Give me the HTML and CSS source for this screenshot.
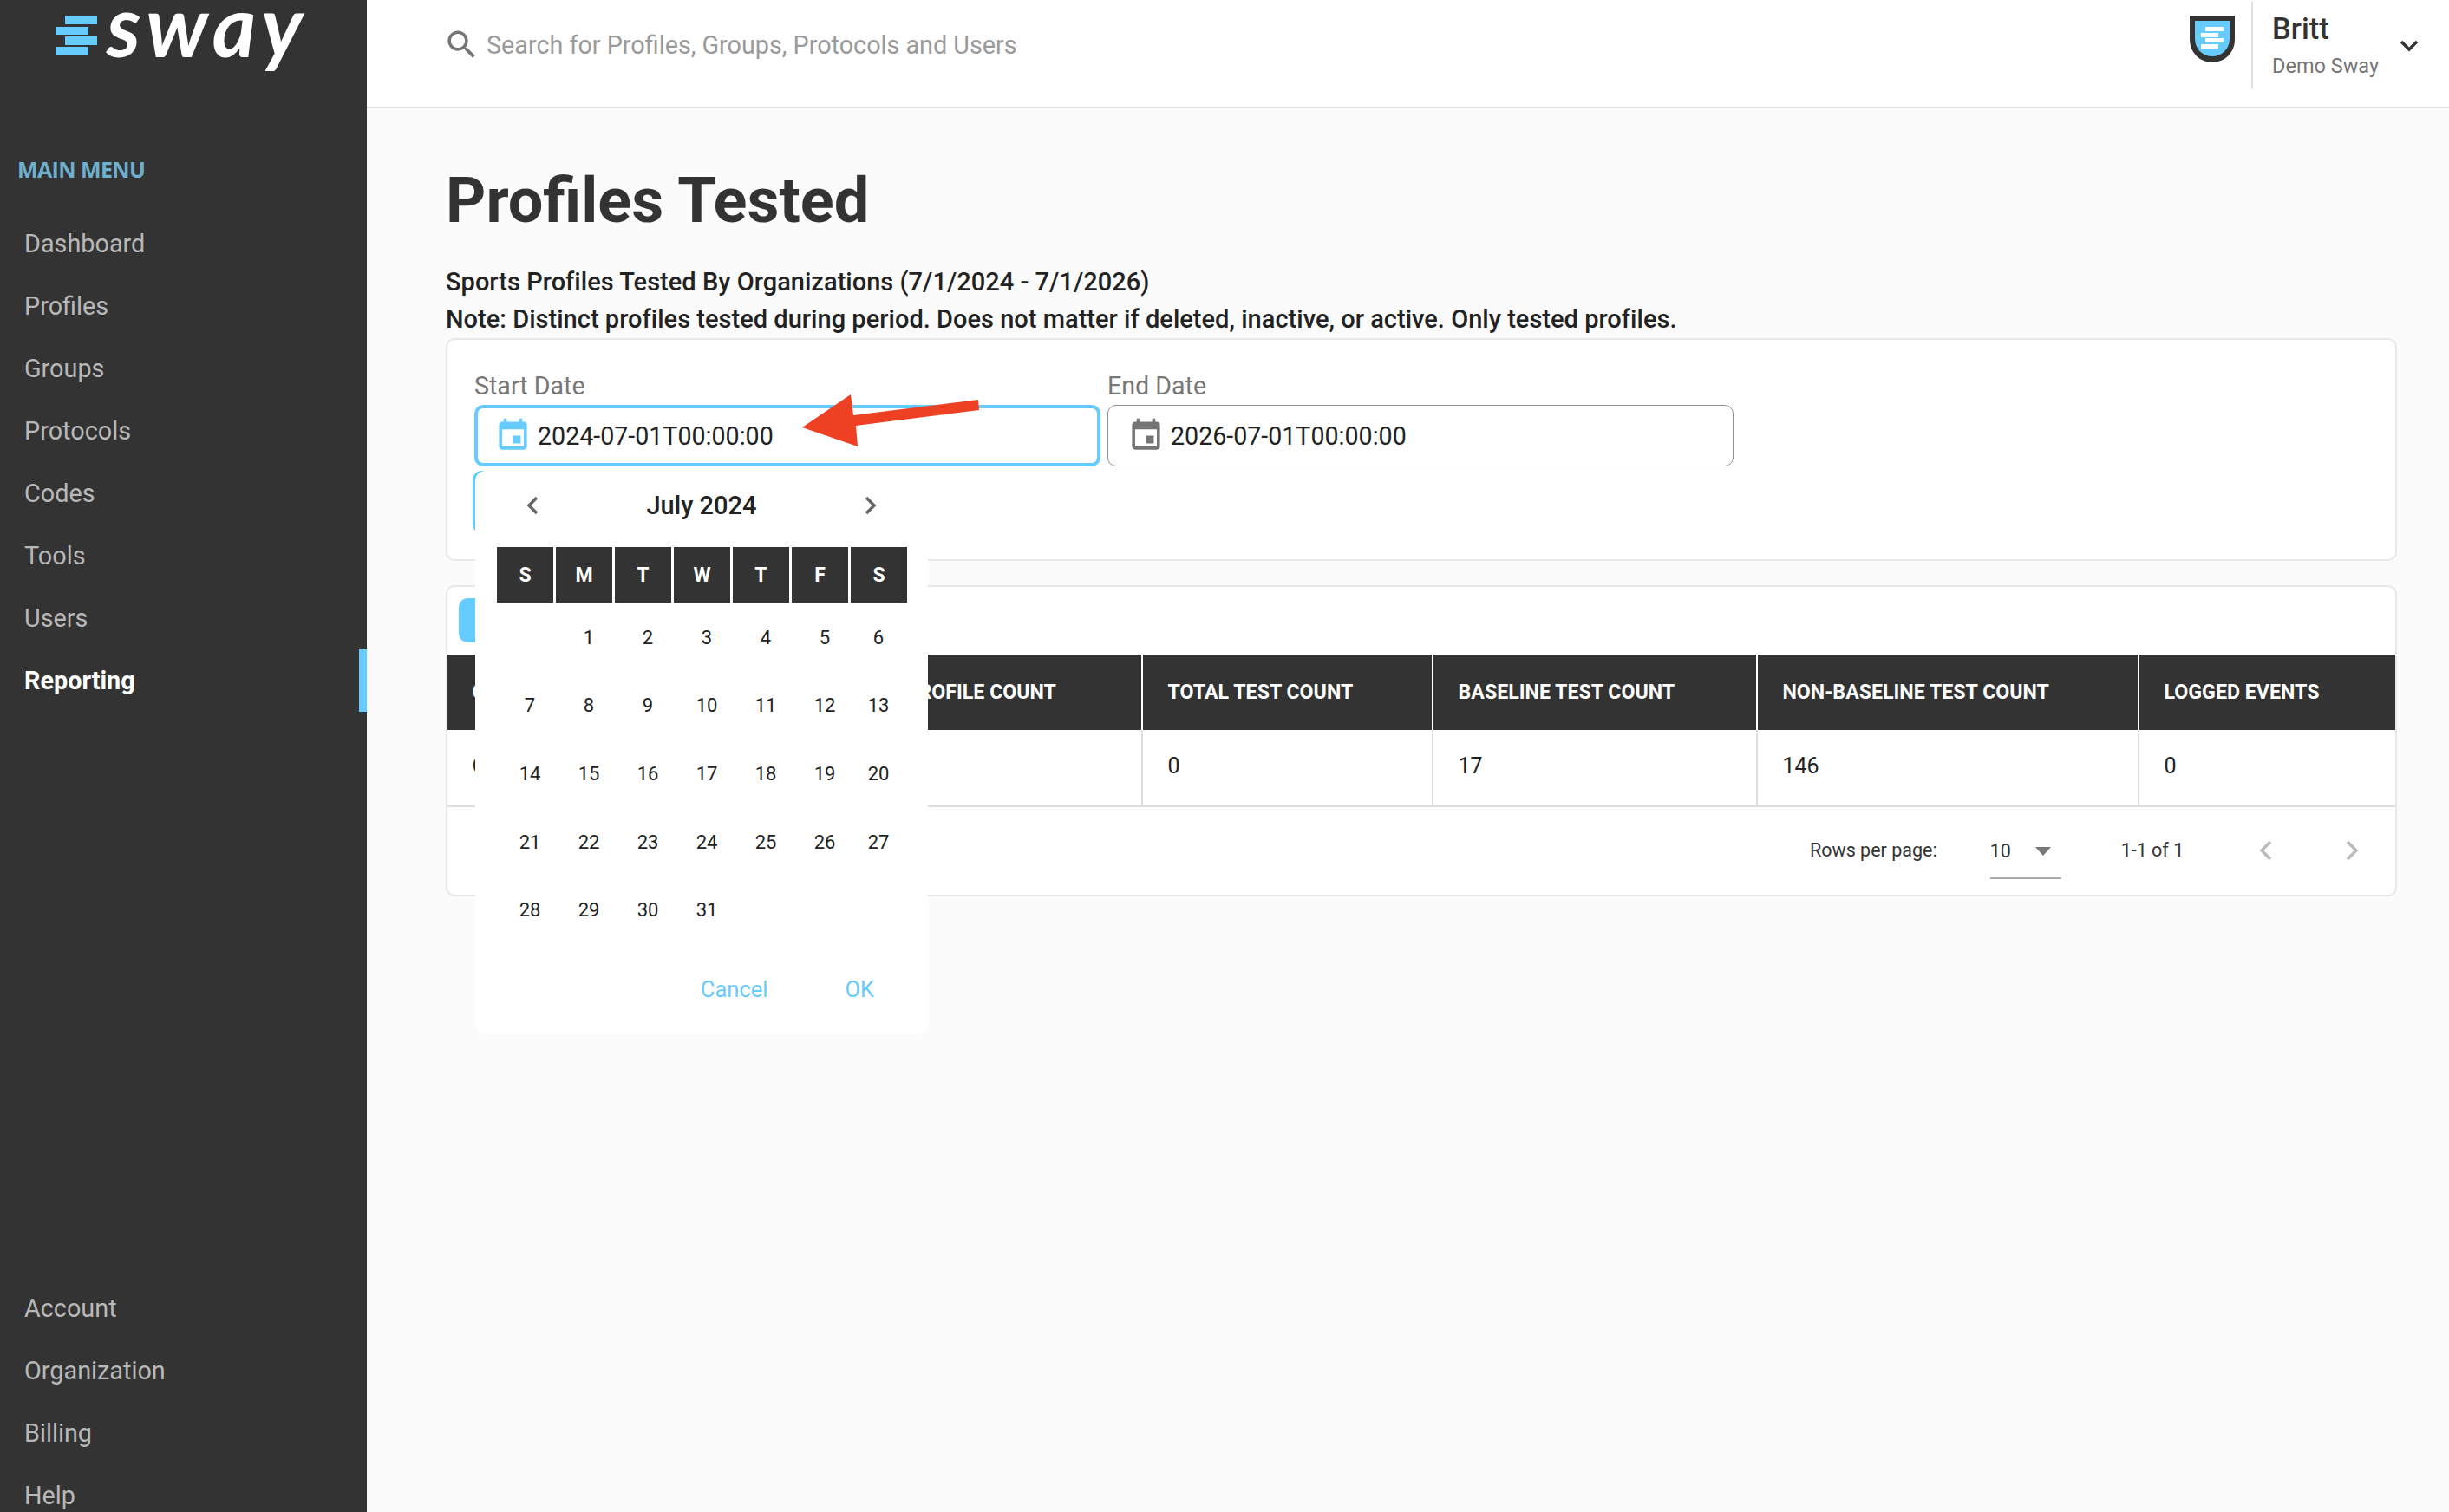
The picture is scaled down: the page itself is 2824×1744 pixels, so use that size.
FILE: index.html
```html
<!DOCTYPE html>
<html lang="en">
<head>
<meta charset="utf-8">
<title>Profiles Tested</title>
<link rel="stylesheet" href="styles.css">
</head>
<body>
<div class="shell">
  <aside class="sidebar">
    <div class="logo">
      <svg class="logo-mark" width="48" height="46" viewBox="0 0 48 46"><rect x="11" y="0" width="37" height="10"/><rect x="0" y="13" width="38" height="9"/><rect x="11" y="24" width="37" height="10"/><rect x="0" y="36" width="38" height="10"/></svg>
      <span class="logo-word">sway</span>
    </div>
    <div class="menu-title">MAIN MENU</div>
    <nav class="nav">
      <a class="nav-item">Dashboard</a>
      <a class="nav-item">Profiles</a>
      <a class="nav-item">Groups</a>
      <a class="nav-item">Protocols</a>
      <a class="nav-item">Codes</a>
      <a class="nav-item">Tools</a>
      <a class="nav-item">Users</a>
      <a class="nav-item active">Reporting</a>
    </nav>
    <nav class="nav nav-bottom">
      <a class="nav-item">Account</a>
      <a class="nav-item">Organization</a>
      <a class="nav-item">Billing</a>
      <a class="nav-item">Help</a>
    </nav>
  </aside>
  <div class="main">
    <header class="topbar">
      <div class="search">
        <svg class="search-icon" width="43" height="43" viewBox="0 0 24 24"><path d="M15.5 14h-.79l-.28-.27C15.41 12.59 16 11.11 16 9.5 16 5.91 13.09 3 9.5 3S3 5.91 3 9.5 5.91 16 9.5 16c1.61 0 3.09-.59 4.23-1.57l.27.28v.79l5 4.99L20.49 19l-4.99-5zm-6 0C7.01 14 5 11.99 5 9.5S7.01 5 9.5 5 14 7.01 14 9.5 11.99 14 9.5 14z"/></svg>
        <span class="search-text">Search for Profiles, Groups, Protocols and Users</span>
      </div>
      <div class="account">
        <svg class="shield" width="52" height="54" viewBox="0 0 52 54"><path class="shield-outer" d="M0 0H52V28A26 26 0 0 1 0 28Z"/><path class="shield-inner" d="M6 6H46V27A20 20 0 0 1 6 27Z"/><rect class="shield-bar" x="18" y="13" width="21" height="5"/><rect class="shield-bar" x="13" y="20" width="20" height="5"/><rect class="shield-bar" x="18" y="26" width="21" height="5"/><rect class="shield-bar" x="13" y="33" width="20" height="5"/></svg>
        <div class="account-info">
          <div class="account-name">Britt</div>
          <div class="account-org">Demo Sway</div>
        </div>
        <svg class="account-chevron" width="22" height="14" viewBox="0 0 22 14"><path d="M2 2L11 11L20 2"/></svg>
      </div>
    </header>
    <main class="content">
      <h1 class="title">Profiles Tested</h1>
      <p class="subtitle">Sports Profiles Tested By Organizations (7/1/2024 - 7/1/2026)</p>
      <p class="subtitle">Note: Distinct profiles tested during period. Does not matter if deleted, inactive, or active. Only tested profiles.</p>

      <section class="card filter-card">
        <div class="fields">
          <div class="field">
            <div class="field-label">Start Date</div>
            <div class="date-input focused">
              <svg class="cal-icon" width="43" height="43" viewBox="0 0 24 24"><path d="M17 12h-5v5h5v-5zM16 1v2H8V1H6v2H5c-1.11 0-1.99.9-1.99 2L3 19c0 1.1.89 2 2 2h14c1.1 0 2-.9 2-2V5c0-1.1-.9-2-2-2h-1V1h-2zm3 18H5V8h14v11z"/></svg>
              <span>2024-07-01T00:00:00</span>
            </div>
          </div>
          <div class="field">
            <div class="field-label">End Date</div>
            <div class="date-input">
              <svg class="cal-icon" width="43" height="43" viewBox="0 0 24 24"><path d="M17 12h-5v5h5v-5zM16 1v2H8V1H6v2H5c-1.11 0-1.99.9-1.99 2L3 19c0 1.1.89 2 2 2h14c1.1 0 2-.9 2-2V5c0-1.1-.9-2-2-2h-1V1h-2zm3 18H5V8h14v11z"/></svg>
              <span>2026-07-01T00:00:00</span>
            </div>
          </div>
        </div>
        <div class="run-button"></div>
      </section>

      <section class="card table-card">
        <div class="export-button"></div>
        <table class="report">
          <colgroup><col class="c1"><col class="c2"><col class="c3"><col class="c4"><col class="c5"><col class="c6"></colgroup>
          <thead>
            <tr><th>ORGANIZATION</th><th>PROFILE COUNT</th><th>TOTAL TEST COUNT</th><th>BASELINE TEST COUNT</th><th>NON-BASELINE TEST COUNT</th><th>LOGGED EVENTS</th></tr>
          </thead>
          <tbody>
            <tr><td>Organization</td><td>5</td><td>0</td><td>17</td><td>146</td><td>0</td></tr>
          </tbody>
        </table>
        <div class="pager">
          <span class="pager-label">Rows per page:</span>
          <div class="pager-select"><span>10</span><i class="caret"></i></div>
          <span class="pager-range">1-1 of 1</span>
          <svg class="pager-arrow" width="16" height="24" viewBox="0 0 16 24"><path d="M13 2L3 12L13 22"/></svg>
          <svg class="pager-arrow" width="16" height="24" viewBox="0 0 16 24"><path d="M3 2L13 12L3 22"/></svg>
        </div>
      </section>
    </main>
  </div>
</div>

<div class="picker">
  <div class="picker-head">
    <svg class="picker-arrow" width="16" height="24" viewBox="0 0 16 24"><path d="M13 3L4 12L13 21"/></svg>
    <span class="picker-month">July 2024</span>
    <svg class="picker-arrow" width="16" height="24" viewBox="0 0 16 24"><path d="M3 3L12 12L3 21"/></svg>
  </div>
  <div class="weekdays">
    <span>S</span><span>M</span><span>T</span><span>W</span><span>T</span><span>F</span><span>S</span>
  </div>
  <div class="days">
    <span></span><span>1</span><span>2</span><span>3</span><span>4</span><span>5</span><span>6</span>
    <span>7</span><span>8</span><span>9</span><span>10</span><span>11</span><span>12</span><span>13</span>
    <span>14</span><span>15</span><span>16</span><span>17</span><span>18</span><span>19</span><span>20</span>
    <span>21</span><span>22</span><span>23</span><span>24</span><span>25</span><span>26</span><span>27</span>
    <span>28</span><span>29</span><span>30</span><span>31</span>
  </div>
  <div class="picker-actions">
    <span>Cancel</span>
    <span>OK</span>
  </div>
</div>

<svg class="annotation" width="204" height="60" viewBox="925 455 204 60"><polygon points="925,493 981,455 984,479 1128,461 1129,473 987,491 989,515"/></svg>
</body>
</html>
```
FILE: styles.css
```css
* { box-sizing: border-box; }
html, body { margin: 0; height: 1744px; overflow: hidden; }
body { font-family: Roboto, "Liberation Sans", sans-serif; color: #222; background: #fbfbfb; position: relative; }

.shell { display: flex; height: 1744px; }

/* sidebar */
.sidebar { width: 423px; flex: none; background: #333; height: 1744px; overflow: hidden; }
.logo { display: flex; align-items: flex-start; height: 170px; padding: 18px 0 0 64px; gap: 11px; }
.logo-mark { flex: none; fill: #66ccff; }
.logo-word { font-family: Lato, sans-serif; font-style: italic; font-weight: 700; font-size: 97px; line-height: 45px; color: #fff; letter-spacing: 6px; margin-top: -12px; }
.menu-title { font-family: "Open Sans", sans-serif; font-weight: 700; font-size: 25px; letter-spacing: -0.6px; line-height: 50px; color: #6fb0cf; padding-left: 20px; margin-bottom: 25px; }
.nav { display: flex; flex-direction: column; }
.nav-bottom { margin-top: 652px; }
.nav-item { display: flex; align-items: center; height: 72px; padding-left: 28px; font-size: 28.8px; color: #b8b8b8; }
.nav-item.active { color: #fff; font-weight: 700; border-right: 9px solid #66ccff; }

/* top bar */
.main { flex: 1; min-width: 0; }
.topbar { display: flex; justify-content: space-between; height: 125px; background: #fff; border-bottom: 2px solid #e0e0e0; padding: 0 35px 0 88px; }
.search { display: flex; align-items: center; gap: 7px; height: 103px; }
.search-icon { fill: #757575; }
.search-text { font-size: 28.75px; color: #9a9a9a; }
.account { display: flex; align-items: flex-start; }
.shield { margin: 18px 19px 0 0; }
.shield-outer { fill: #333; }
.shield-inner { fill: #66ccff; }
.shield-bar { fill: #fff; }
.account-info { height: 100px; margin-top: 2px; border-left: 2px solid #e0e0e0; padding-left: 22px; width: 172px; }
.account-name { font-size: 34.5px; font-weight: 500; color: #333; line-height: 40px; margin-top: 11px; }
.account-org { font-size: 23.5px; color: #757575; line-height: 30px; margin-top: 8px; }
.account-chevron { fill: none; stroke: #333; stroke-width: 3.5px; margin: 46px 0 0 -1px; }

/* content */
.content { padding: 0 60px 0 91px; }
.title { margin: 0; font-size: 72px; font-weight: 700; color: #333; line-height: 84px; padding-top: 65px; margin-bottom: 30px; }
.subtitle { margin: 0; font-size: 29px; font-weight: 500; color: #222; line-height: 43px; letter-spacing: 0.02px; }
.card { background: #fff; border: 2px solid #e8e8e8; border-radius: 10px; }
.filter-card { height: 257px; padding: 37px 0 0 31px; }
.fields { display: flex; gap: 8px; }
.field { width: 722px; }
.field-label { font-size: 28.6px; line-height: 32px; color: #777; margin-bottom: 6px; }
.date-input { display: flex; align-items: center; gap: 7px; height: 71px; border: 1px solid #909090; border-radius: 10px; padding-left: 22px; font-size: 28.6px; color: #222; }
.cal-icon { fill: #757575; flex: none; }
.date-input.focused { border: 4px solid #66ccff; padding-left: 19px; }
.date-input.focused .cal-icon { fill: #66ccff; }
.run-button { width: 300px; height: 72px; margin: 5px 0 0 -2px; border: 4px solid #66ccff; border-radius: 10px; }

.table-card { height: 359px; margin-top: 28px; }
.export-button { width: 300px; height: 51px; margin: 13px 0 14px 13px; background: #66ccff; border-radius: 10px; }
.report { width: 2246px; border-collapse: collapse; table-layout: fixed; }
.c1 { width: 499px; }
.c2 { width: 302px; }
.c3 { width: 335px; }
.c4 { width: 374px; }
.c5 { width: 440px; }
.c6 { width: 296px; }
.report th { height: 87px; background: #333; color: #fff; font-size: 23.2px; font-weight: 700; text-align: left; padding: 0 0 2px 28.5px; border-left: 2px solid #fff; }
.report th:first-child, .report td:first-child { border-left: 0; }
.report td { height: 87px; font-size: 25px; color: #222; padding: 0 0 2px 28.5px; border-left: 2px solid #ddd; border-bottom: 3px solid #ddd; }
.pager { display: flex; align-items: center; height: 100px; font-size: 21.5px; color: #333; }
.pager-label { margin-left: 1571px; }
.pager-select { display: flex; align-items: center; width: 82px; height: 62px; margin: 4px 0 0 61px; border-bottom: 2px solid #aaa; }
.caret { width: 0; height: 0; border: 9px solid transparent; border-top: 10px solid #777; border-bottom: 0; margin-left: 28px; }
.pager-range { margin-left: 69px; }
.pager-arrow { fill: none; stroke: #bbb; stroke-width: 3.5px; }
.pager-range + .pager-arrow { margin-left: 87px; }
.pager-arrow + .pager-arrow { margin-left: 83px; }

/* date picker popover */
.picker { position: absolute; left: 548px; top: 543px; width: 522px; height: 650px; background: #fff; border-radius: 12px; padding: 0 0 0 25px; }
.picker-head { display: flex; align-items: center; justify-content: space-between; height: 80px; padding: 0 33px; width: 472px; }
.picker-month { font-size: 29px; font-weight: 500; color: #222; }
.picker-arrow { fill: none; stroke: #666; stroke-width: 3.5px; }
.weekdays { display: grid; grid-template-columns: repeat(7, 65px); gap: 3px; margin-top: 8px; }
.weekdays span { display: flex; align-items: center; justify-content: center; height: 64px; background: #333; color: #fff; font-size: 23px; font-weight: 700; }
.days { display: grid; grid-template-columns: repeat(6, 68px) 56px; grid-auto-rows: 78.6px; margin: 1px 0 0 4px; }
.days span { display: flex; align-items: center; justify-content: center; font-size: 22px; color: #222; }
.picker-actions { display: flex; justify-content: flex-end; gap: 89px; padding-right: 62px; margin-top: 34px; font-size: 25.5px; color: #66ccff; line-height: 36px; }

.annotation { position: absolute; left: 925px; top: 455px; }
.annotation polygon { fill: #ee4023; }
```
